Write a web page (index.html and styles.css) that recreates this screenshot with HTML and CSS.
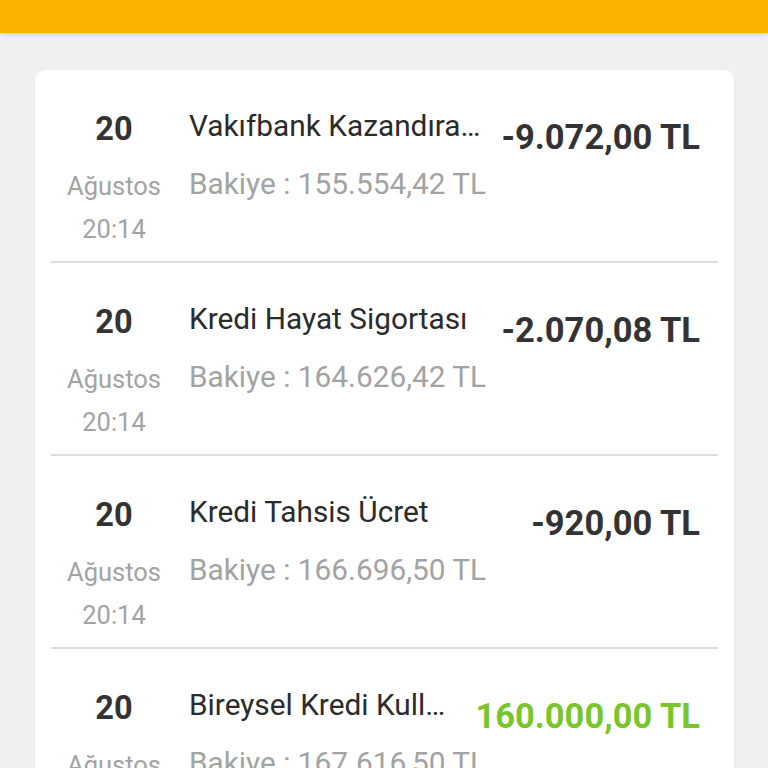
FILE: index.html
```html
<!DOCTYPE html>
<html lang="tr">
<head>
<meta charset="utf-8">
<link rel="stylesheet" href="styles.css">
</head>
<body>
<header class="topbar"></header>
<main class="content">
  <section class="card">
    <div class="row">
      <div class="date"><span class="day">20</span><span class="month">Ağustos</span><span class="time">20:14</span></div>
      <div class="info"><span class="title">Vakıfbank Kazandıra…</span><span class="balance">Bakiye : 155.554,42 TL</span></div>
      <div class="amount">-9.072,00 TL</div>
    </div>
    <div class="row">
      <div class="date"><span class="day">20</span><span class="month">Ağustos</span><span class="time">20:14</span></div>
      <div class="info"><span class="title">Kredi Hayat Sigortası</span><span class="balance">Bakiye : 164.626,42 TL</span></div>
      <div class="amount">-2.070,08 TL</div>
    </div>
    <div class="row">
      <div class="date"><span class="day">20</span><span class="month">Ağustos</span><span class="time">20:14</span></div>
      <div class="info"><span class="title">Kredi Tahsis Ücret</span><span class="balance">Bakiye : 166.696,50 TL</span></div>
      <div class="amount">-920,00 TL</div>
    </div>
    <div class="row">
      <div class="date"><span class="day">20</span><span class="month">Ağustos</span><span class="time">20:14</span></div>
      <div class="info"><span class="title">Bireysel Kredi Kull…</span><span class="balance">Bakiye : 167.616,50 TL</span></div>
      <div class="amount positive">160.000,00 TL</div>
    </div>
  </section>
</main>
</body>
</html>
```
FILE: styles.css
```css
* { box-sizing: border-box; }
html, body { margin: 0; padding: 0; }
body {
  background: #f1f0ee;
  font-family: Roboto, "Liberation Sans", sans-serif;
  height: 768px;
  overflow: hidden;
}
.topbar {
  height: 33px;
  background: #fdb100;
  box-shadow: 0 1px 4px rgba(0,0,0,0.18);
}
.content {
  padding: 37px 34px 0 35px;
}
.card {
  background: #ffffff;
  border-radius: 10px;
  padding: 0 16px;
  box-shadow: 0 0 2px rgba(0,0,0,0.04);
}
.row {
  display: flex;
  align-items: flex-start;
  height: 193px;
  border-bottom: 2px solid #dcdcdc;
}
.row:last-child { border-bottom: none; }
.date {
  width: 126px;
  flex: none;
  display: flex;
  flex-direction: column;
  align-items: center;
  padding-top: 39px;
}
.day {
  font-size: 32.5px;
  font-weight: 700;
  color: #333333;
  line-height: 40px;
  margin-bottom: 16px;
}
.month, .time {
  font-size: 25.5px;
  color: #a3a3a3;
  line-height: 43px;
}
.info {
  flex: 1;
  min-width: 0;
  display: flex;
  flex-direction: column;
  padding-top: 36px;
  margin-left: 12px;
  white-space: nowrap;
}
.title {
  font-size: 29.8px;
  color: #2b2b2b;
  line-height: 40px;
  margin-bottom: 18px;
}
.balance {
  font-size: 29.8px;
  color: #a3a3a3;
  line-height: 40px;
}
.amount {
  flex: none;
  padding-top: 47px;
  padding-right: 18px;
  font-size: 34.5px;
  font-weight: 700;
  line-height: 40px;
  color: #333333;
  white-space: nowrap;
}
.amount.positive { color: #79c52c; }
```
